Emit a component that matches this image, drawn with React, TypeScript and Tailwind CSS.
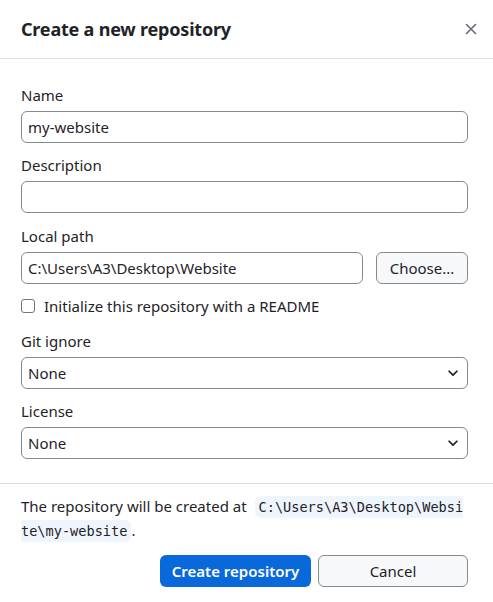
const Label = ({ children }: { children: React.ReactNode }) => (
  <div className="text-[15px] leading-[20px] text-[#1f2328] mb-[6px]">{children}</div>
)

const Chevron = () => (
  <svg width="14" height="14" viewBox="0 0 16 16" className="shrink-0">
    <path d="M3.5 6 8 10.5 12.5 6" fill="none" stroke="#1f2328" strokeWidth="2" strokeLinecap="round" strokeLinejoin="round" />
  </svg>
)

const SelectBox = ({ value }: { value: string }) => (
  <div className="h-[32px] w-full rounded-[6px] border border-[#858a91] flex items-center justify-between pl-[6px] pr-[7px] text-[15px] text-[#1f2328]">
    <span>{value}</span>
    <Chevron />
  </div>
)

const App = () => {
  return (
    <div className="w-[493px] h-[602px] bg-white font-['Noto_Sans',sans-serif] text-[#1f2328]">
      <div className="h-[59px] flex items-center justify-between pl-[21px] pr-[14px] border-b border-[#d8dee4]">
        <h1 className="text-[18px] font-bold tracking-[-0.2px]">Create a new repository</h1>
        <svg width="16" height="16" viewBox="0 0 16 16">
          <path d="M3.5 3.5 12.5 12.5 M12.5 3.5 3.5 12.5" stroke="#636c76" strokeWidth="1.6" strokeLinecap="round" />
        </svg>
      </div>

      <div className="pl-[21px] pr-[25px] pt-[26px] border-b border-[#d8dee4] pb-[24px]">
        <Label>Name</Label>
        <div className="h-[32px] rounded-[6px] border border-[#858a91] flex items-center px-[6px] text-[15px]">my-website</div>

        <div className="mt-[12px]"><Label>Description</Label></div>
        <div className="h-[32px] rounded-[6px] border border-[#858a91]"></div>

        <div className="mt-[13px]"><Label>Local path</Label></div>
        <div className="flex gap-[13px]">
          <div className="flex-1 h-[32px] rounded-[6px] border border-[#858a91] flex items-center px-[6px] text-[15px]">C:\Users\A3\Desktop\Website</div>
          <div className="w-[92px] h-[32px] rounded-[6px] border border-[#858a91] bg-[#f6f8fa] flex items-center justify-center text-[15px]">Choose...</div>
        </div>

        <label className="mt-[11px] flex items-center gap-[9px] text-[15px] h-[22px]">
          <span className="w-[14px] h-[14px] rounded-[3px] border border-[#6e7781] bg-white"></span>
          Initialize this repository with a README
        </label>

        <div className="mt-[14px]"><Label>Git ignore</Label></div>
        <SelectBox value="None" />

        <div className="mt-[12px]"><Label>License</Label></div>
        <SelectBox value="None" />
      </div>

      <div className="pl-[21px] pr-[25px] pt-[11px]">
        <p className="text-[15px] leading-[23px] break-all">
          The repository will be created at{' '}
          <code className="ml-[4px] font-['DejaVu_Sans_Mono',monospace] text-[13.6px] bg-[#eff5fd] rounded-[6px] px-[4px] py-[3px]">C:\Users\A3\Desktop\Website\my-website</code>.
        </p>
        <div className="mt-[12px] flex justify-end gap-[7px]">
          <button className="w-[151px] h-[32px] rounded-[6px] bg-[#0969da] text-white text-[15px] font-semibold">Create repository</button>
          <button className="w-[150px] h-[32px] rounded-[6px] border border-[#858a91] bg-[#f6f8fa] text-[15px]">Cancel</button>
        </div>
      </div>
    </div>
  )
}

export default App
